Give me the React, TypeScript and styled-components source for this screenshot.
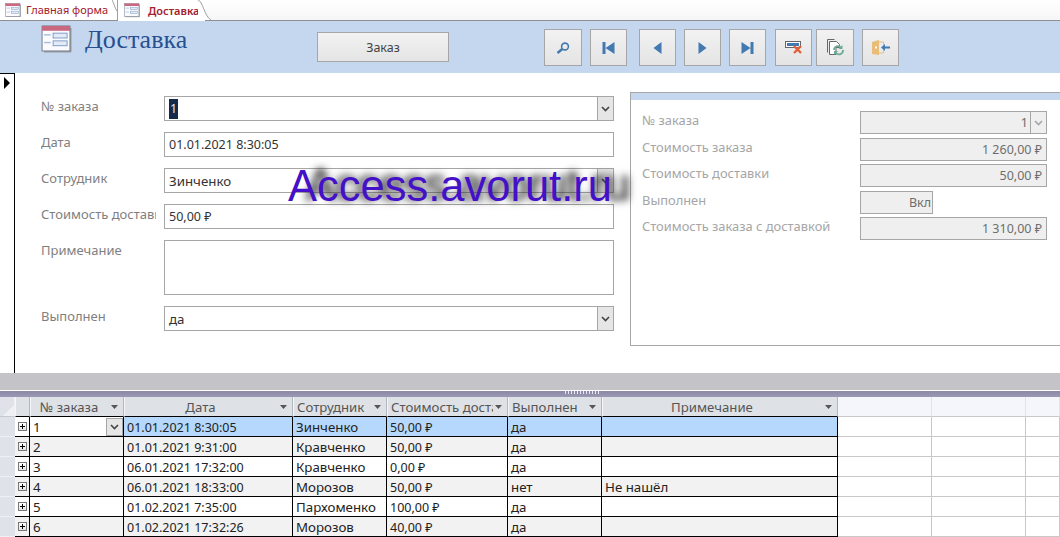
import React from 'react';
import styled, { createGlobalStyle } from 'styled-components';

const GlobalStyle = createGlobalStyle`
  html, body {
    margin: 0;
    padding: 0;
    background: #fff;
  }
  body {
    font-family: "Noto Sans", "Open Sans", sans-serif;
    font-size: 12.5px;
  }
`;

const Page = styled.div`
  width: 1060px;
  height: 537px;
  overflow: hidden;
  position: relative;
  display: flex;
  flex-direction: column;
  color: #333;
`;

/* tabs */
const TabBar = styled.div`
  height: 20px;
  flex: none;
  display: flex;
  background: linear-gradient(#fff, #f6f6f6);
  border-bottom: 1px solid #8f8f8f;
`;

const Tab = styled.div<{ $active?: boolean; $width: number }>`
  width: ${p => p.$width}px;
  height: ${p => (p.$active ? 21 : 20)}px;
  box-sizing: border-box;
  display: flex;
  align-items: center;
  padding-left: ${p => (p.$active ? 6 : 5)}px;
  gap: ${p => (p.$active ? 8 : 5)}px;
  background: #fff;
  position: relative;
  color: #a5202c;
  font-size: 11px;
  font-weight: ${p => (p.$active ? 600 : 400)};
  border-right: ${p => (p.$active ? 'none' : '1px solid #a0a0a0')};
  line-height: 18px;
`;

const TabCurve = styled.svg`
  position: absolute;
  right: -7px;
  top: 0;
`;

const TabNotch = styled.svg`
  position: absolute;
  right: -1px;
  top: 0;
`;

/* header */
const Header = styled.div`
  height: 52px;
  flex: none;
  display: flex;
  background: #c5d7ef;
`;

const TitleBlock = styled.div`
  width: 317px;
  flex: none;
  box-sizing: border-box;
  padding: 4px 0 0 41px;
  display: flex;
  gap: 13px;
  align-items: flex-start;
`;

const Title = styled.div`
  font-family: "Liberation Serif", serif;
  font-size: 26px;
  line-height: 30px;
  color: #27508f;
`;

const OrderButton = styled.div`
  width: 132px;
  height: 30px;
  margin: 11px 95px 0 0;
  flex: none;
  box-sizing: border-box;
  border: 1px solid #a6a6a6;
  background: linear-gradient(#f2f2f2, #e4e4e4);
  display: flex;
  align-items: center;
  justify-content: center;
  font-size: 12.5px;
  color: #444;
`;

const ToolButton = styled.div<{ $after: number; $width?: number }>`
  width: ${p => p.$width ?? 38}px;
  height: 37px;
  margin: 8px ${p => p.$after}px 0 0;
  flex: none;
  box-sizing: border-box;
  border: 1px solid #a6a6a6;
  background: linear-gradient(#f2f2f2, #e4e4e4);
  display: flex;
  align-items: center;
  justify-content: center;
`;

/* form */
const FormArea = styled.div`
  height: 300px;
  flex: none;
  display: flex;
  background: #fff;
`;

const RecordSelector = styled.div`
  width: 15px;
  flex: none;
  box-sizing: border-box;
  border-top: 1px solid #000;
  border-right: 1px solid #000;
  padding: 2px 0 0 4px;
`;

const LeftPane = styled.div`
  width: 599px;
  flex: none;
  box-sizing: border-box;
  padding: 23px 0 0 26px;
  display: flex;
  flex-direction: column;
  gap: 11px;
`;

const FieldRow = styled.div`
  display: flex;
`;

const FieldLabel = styled.div`
  width: 115px;
  margin-right: 8px;
  flex: none;
  overflow: hidden;
  white-space: nowrap;
  color: #7f7f7f;
  font-size: 13px;
  line-height: 20px;
`;

const FieldBox = styled.div<{ $height?: number }>`
  width: 450px;
  height: ${p => p.$height ?? 25}px;
  box-sizing: border-box;
  border: 1px solid #a6a6a6;
  background: #fff;
  display: flex;
  align-items: center;
  justify-content: space-between;
  padding-left: 4px;
  font-size: 12.5px;
  color: #333;
`;

const Selected = styled.span`
  background: #14294a;
  color: #dfe8f5;
  padding: 0 1px;
  line-height: 20px;
`;

const ComboArrow = styled.div<{ $faded?: boolean }>`
  width: 16px;
  align-self: stretch;
  flex: none;
  box-sizing: border-box;
  border-left: 1px solid #a6a6a6;
  background: ${p => (p.$faded ? '#efefef' : '#e6e6e6')};
  display: flex;
  align-items: center;
  justify-content: center;
`;

const SummaryPanel = styled.div`
  width: 431px;
  height: 254px;
  margin: 19px 0 0 16px;
  flex: none;
  box-sizing: border-box;
  border: 1px solid #a6a6a6;
  border-right: none;
  display: flex;
  flex-direction: column;
`;

const SummaryStrip = styled.div`
  height: 7px;
  flex: none;
  background: #c5d7ef;
`;

const SummaryRows = styled.div`
  padding: 11px 0 0 11px;
  display: flex;
  flex-direction: column;
  gap: 3.5px;
`;

const SummaryRow = styled.div`
  display: flex;
  height: 23px;
`;

const SummaryLabel = styled.div`
  width: 218px;
  flex: none;
  color: #a6a6a6;
  font-size: 12.9px;
  line-height: 19px;
  white-space: nowrap;
`;

const SummaryBox = styled.div<{ $width?: number }>`
  width: ${p => p.$width ?? 187}px;
  box-sizing: border-box;
  border: 1px solid #a6a6a6;
  background: #efefef;
  display: flex;
  align-items: center;
  justify-content: flex-end;
  padding-right: ${p => (p.$width ? 1 : 4)}px;
  color: #6e6e6e;
  font-size: 12.5px;
`;

const SummaryCombo = styled(SummaryBox)`
  padding-right: 0;
  gap: 2px;
`;

/* splitter */
const Splitter = styled.div`
  height: 17px;
  flex: none;
  background: #c4c4c8;
  border-bottom: 1px solid #fff;
`;

const SplitBand = styled.div`
  height: 6px;
  flex: none;
  background: linear-gradient(#8b89a6, #9a98b4);
  position: relative;
`;

const SplitGrip = styled.div`
  position: absolute;
  left: 565px;
  top: 0;
  width: 36px;
  height: 3px;
  background: repeating-linear-gradient(90deg, #e8e8f0 0 1px, transparent 1px 3px);
`;

/* datasheet */
const columns = '15px 15px 94px 169px 94px 121px 94px 236px 94px 94px 34px';

const SheetRow = styled.div`
  display: grid;
  grid-template-columns: ${columns};
  height: 20px;
  flex: none;
`;

const Corner = styled.div`
  background: #dfe3e9;
  box-sizing: border-box;
  border-bottom: 1px solid #c5c9d0;
  border-right: 1px solid #eef0f3;
  display: flex;
  align-items: flex-end;
  justify-content: flex-end;
`;

const HeadCell = styled.div`
  box-sizing: border-box;
  background: #dee1e6;
  border-bottom: 1px solid #000;
  border-right: 1px solid #b4b7bd;
  border-left: 1px solid #f4f5f7;
  display: flex;
  align-items: center;
  padding: 0 5px 0 3px;
  gap: 2px;
  font-size: 13.2px;
  color: #555;
  white-space: nowrap;
  overflow: hidden;
`;

const HeadText = styled.span<{ $left?: boolean }>`
  flex: 1;
  min-width: 0;
  overflow: hidden;
  padding-right: ${p => (p.$left ? 1 : 5)}px;
  text-align: ${p => (p.$left ? 'left' : 'center')};
`;

const EmptyHead = styled.div`
  box-sizing: border-box;
  background: #f5f6fc;
  border-bottom: 1px solid #c8c8c8;
  border-right: 1px solid #e2e3ea;
`;

const Cell = styled.div<{ $tone: 'plain' | 'alt' | 'active' }>`
  box-sizing: border-box;
  border-right: 1px solid #000;
  border-bottom: 1px solid #000;
  background: ${p => (p.$tone === 'active' ? '#b5d8fc' : p.$tone === 'alt' ? '#f2f2f2' : '#fff')};
  display: flex;
  align-items: center;
  justify-content: space-between;
  padding: 1px 0 0 3px;
  font-size: 12.5px;
  color: #222;
  white-space: nowrap;
  overflow: hidden;
`;

const ExpandCell = styled(Cell)`
  padding: 0 0 0 3px;
  justify-content: flex-start;
`;

const Words = styled.span`
  font-size: 13.3px;
`;

const PlusBox = styled.div`
  width: 9px;
  height: 9px;
  box-sizing: border-box;
  border: 1px solid #777;
  background: linear-gradient(#fff, #e4e4e4);
  position: relative;
  &::before {
    content: '';
    position: absolute;
    left: 1px;
    top: 3px;
    width: 5px;
    height: 1px;
    background: #000;
  }
  &::after {
    content: '';
    position: absolute;
    left: 3px;
    top: 1px;
    width: 1px;
    height: 5px;
    background: #000;
  }
`;

const SideCell = styled.div`
  box-sizing: border-box;
  background: #dfe3e9;
  border-bottom: 1px solid #eef0f3;
`;

const EmptyCell = styled.div`
  box-sizing: border-box;
  background: #fff;
  border-right: 1px solid #c8c8c8;
  border-bottom: 1px solid #c8c8c8;
`;

const GridCombo = styled.div`
  width: 17px;
  height: 18px;
  flex: none;
  box-sizing: border-box;
  border: 1px solid #a6a6a6;
  background: #e6e6e6;
  display: flex;
  align-items: center;
  justify-content: center;
`;

/* watermark over the form */
const Watermark = styled.div`
  position: absolute;
  left: 288px;
  top: 161px;
  font-family: "Liberation Sans", Arial, sans-serif;
  font-size: 43.5px;
  line-height: 50px;
  color: #4410c8;
  white-space: nowrap;
  text-shadow: 18px -1px 7px rgba(50, 50, 50, 0.85), 18px -1px 10px rgba(50, 50, 50, 0.6);
`;

const FormIcon: React.FC<{ size: number }> = ({ size }) => (
  <svg width={size} height={size * 0.9} viewBox="0 0 32 29" style={{ flex: 'none' }}>
    <rect x="1" y="1" width="29" height="26" fill="#fbfbfd" stroke="#6f7a8c" />
    <rect x="1" y="1" width="29" height="5" fill="#c9677f" />
    <rect x="30" y="3" width="1.5" height="25" fill="#8a8f98" />
    <rect x="3" y="27" width="28" height="1.5" fill="#8a8f98" />
    <rect x="3" y="9.5" width="7" height="1.5" fill="#a9bfdc" />
    <rect x="3" y="17.5" width="7" height="1.5" fill="#a9bfdc" />
    <rect x="12.5" y="8.5" width="14.5" height="5" fill="#e3ebf6" stroke="#7e9cc6" />
    <rect x="12.5" y="16.5" width="14.5" height="5" fill="#e3ebf6" stroke="#7e9cc6" />
  </svg>
);

const Chevron: React.FC<{ color?: string }> = ({ color = '#444' }) => (
  <svg width="9" height="6" viewBox="0 0 9 6">
    <path d="M1 1l3.5 3.5L8 1" fill="none" stroke={color} strokeWidth="1.6" />
  </svg>
);

const SortArrow: React.FC = () => (
  <svg width="7" height="4" viewBox="0 0 7 4" style={{ flex: 'none' }}>
    <path d="M0 0h7L3.5 4z" fill="#555" />
  </svg>
);

const blue = '#4279b0';

const NavIcon: React.FC<{ kind: 'first' | 'prev' | 'next' | 'last' }> = ({ kind }) => (
  <svg width="13" height="12" viewBox="0 0 13 12">
    {kind === 'first' && <path d="M0.5 0h3v12h-3zM12.5 0v12L3.5 6z" fill={blue} />}
    {kind === 'prev' && <path d="M10.5 0v12L2.5 6z" fill={blue} />}
    {kind === 'next' && <path d="M2.5 0v12l8-6z" fill={blue} />}
    {kind === 'last' && <path d="M0.5 0v12l9-6zM9.5 0h3v12h-3z" fill={blue} />}
  </svg>
);

const SearchIcon: React.FC = () => (
  <svg width="14" height="12" viewBox="0 0 14 12">
    <circle cx="9" cy="4.5" r="3.4" fill="none" stroke={blue} strokeWidth="1.6" />
    <path d="M6.3 7L1.5 11" stroke={blue} strokeWidth="2.4" />
  </svg>
);

const DeleteIcon: React.FC = () => (
  <svg width="17" height="13" viewBox="0 0 17 13">
    <rect x="0.5" y="0.5" width="15" height="6" fill="#fff" stroke="#666" />
    <rect x="2" y="2" width="12" height="3" fill={blue} />
    <path d="M9 5l7 7M16 5l-7 7" stroke="#e0603c" strokeWidth="2.4" />
  </svg>
);

const CopyIcon: React.FC = () => (
  <svg width="17" height="17" viewBox="0 0 17 17">
    <path d="M0.5 13.5V0.5h7" fill="none" stroke="#666" />
    <path d="M2.5 15.5V2.5h7l3 3v3H9v7z" fill="#fff" stroke="#666" />
    <path d="M7 11a4 4 0 0 1 7-2.5M16 11a4 4 0 0 1-7 3" fill="none" stroke="#6bab94" strokeWidth="1.8" />
    <path d="M15.5 6v4h-4zM7 16v-4h4z" fill="#6bab94" />
  </svg>
);

const ExitIcon: React.FC = () => (
  <svg width="18" height="15" viewBox="0 0 18 15">
    <path d="M0 2l7-2v15l-7-1z" fill="#e9bd78" />
    <path d="M7 2h4.5v3M7 13h4.5v-3" fill="none" stroke="#e9bd78" />
    <rect x="3" y="6.5" width="2" height="2" fill="#fff" />
    <path d="M18 6.5v2h-5v2.5L9 7.5 13 4v2.5z" fill={blue} />
  </svg>
);

type Order = {
  id: number;
  date: string;
  worker: string;
  cost: string;
  done: string;
  note: string;
};

const orders: Order[] = [
  { id: 1, date: '01.01.2021 8:30:05', worker: 'Зинченко', cost: '50,00 ₽', done: 'да', note: '' },
  { id: 2, date: '01.01.2021 9:31:00', worker: 'Кравченко', cost: '50,00 ₽', done: 'да', note: '' },
  { id: 3, date: '06.01.2021 17:32:00', worker: 'Кравченко', cost: '0,00 ₽', done: 'да', note: '' },
  { id: 4, date: '06.01.2021 18:33:00', worker: 'Морозов', cost: '50,00 ₽', done: 'нет', note: 'Не нашёл' },
  { id: 5, date: '01.02.2021 7:35:00', worker: 'Пархоменко', cost: '100,00 ₽', done: 'да', note: '' },
  { id: 6, date: '01.02.2021 17:32:26', worker: 'Морозов', cost: '40,00 ₽', done: 'да', note: '' },
];

const headers: { text: string; left?: boolean }[] = [
  { text: '№ заказа' },
  { text: 'Дата' },
  { text: 'Сотрудник', left: true },
  { text: 'Стоимость доставки', left: true },
  { text: 'Выполнен', left: true },
  { text: 'Примечание' },
];

const App: React.FC = () => {
  return (
    <Page>
      <GlobalStyle />
      <TabBar>
        <Tab $width={118}>
          <FormIcon size={16} />
          Главная форма
          <TabNotch width="6" height="20" viewBox="0 0 6 20">
            <path d="M0 0c2 3 3 9 5 11" fill="none" stroke="#a0a0a0" />
          </TabNotch>
        </Tab>
        <Tab $active $width={87}>
          <FormIcon size={16} />
          Доставка
          <TabCurve width="14" height="21" viewBox="0 0 14 21">
            <path d="M0 0c5 1 6 16 13 20H0z" fill="#fff" />
            <path d="M0 0c5 1 6 16 13 20" fill="none" stroke="#a0a0a0" />
          </TabCurve>
        </Tab>
      </TabBar>

      <Header>
        <TitleBlock>
          <FormIcon size={31} />
          <Title>Доставка</Title>
        </TitleBlock>
        <OrderButton>Заказ</OrderButton>
        <ToolButton $after={8}><SearchIcon /></ToolButton>
        <ToolButton $after={12} $width={37}><NavIcon kind="first" /></ToolButton>
        <ToolButton $after={8} $width={37}><NavIcon kind="prev" /></ToolButton>
        <ToolButton $after={8} $width={37}><NavIcon kind="next" /></ToolButton>
        <ToolButton $after={9} $width={37}><NavIcon kind="last" /></ToolButton>
        <ToolButton $after={4} $width={37}><DeleteIcon /></ToolButton>
        <ToolButton $after={8}><CopyIcon /></ToolButton>
        <ToolButton $after={0} $width={37}><ExitIcon /></ToolButton>
      </Header>

      <FormArea>
        <RecordSelector>
          <svg width="7" height="12" viewBox="0 0 7 12">
            <path d="M0 0l6 6-6 6z" fill="#000" />
          </svg>
        </RecordSelector>
        <LeftPane>
          <FieldRow>
            <FieldLabel>№ заказа</FieldLabel>
            <FieldBox>
              <Selected>1</Selected>
              <ComboArrow><Chevron /></ComboArrow>
            </FieldBox>
          </FieldRow>
          <FieldRow>
            <FieldLabel>Дата</FieldLabel>
            <FieldBox>01.01.2021 8:30:05</FieldBox>
          </FieldRow>
          <FieldRow>
            <FieldLabel>Сотрудник</FieldLabel>
            <FieldBox>
              <Words>Зинченко</Words>
              <ComboArrow><Chevron /></ComboArrow>
            </FieldBox>
          </FieldRow>
          <FieldRow>
            <FieldLabel>Стоимость доставки</FieldLabel>
            <FieldBox>50,00 ₽</FieldBox>
          </FieldRow>
          <FieldRow>
            <FieldLabel>Примечание</FieldLabel>
            <FieldBox $height={55} />
          </FieldRow>
          <FieldRow>
            <FieldLabel>Выполнен</FieldLabel>
            <FieldBox>
              <Words>да</Words>
              <ComboArrow><Chevron /></ComboArrow>
            </FieldBox>
          </FieldRow>
        </LeftPane>
        <SummaryPanel>
          <SummaryStrip />
          <SummaryRows>
            <SummaryRow>
              <SummaryLabel>№ заказа</SummaryLabel>
              <SummaryCombo>
                1
                <ComboArrow $faded><Chevron color="#a6a6a6" /></ComboArrow>
              </SummaryCombo>
            </SummaryRow>
            <SummaryRow>
              <SummaryLabel>Стоимость заказа</SummaryLabel>
              <SummaryBox>1 260,00 ₽</SummaryBox>
            </SummaryRow>
            <SummaryRow>
              <SummaryLabel>Стоимость доставки</SummaryLabel>
              <SummaryBox>50,00 ₽</SummaryBox>
            </SummaryRow>
            <SummaryRow>
              <SummaryLabel>Выполнен</SummaryLabel>
              <SummaryBox $width={73}>Вкл</SummaryBox>
            </SummaryRow>
            <SummaryRow>
              <SummaryLabel>Стоимость заказа с доставкой</SummaryLabel>
              <SummaryBox>1 310,00 ₽</SummaryBox>
            </SummaryRow>
          </SummaryRows>
        </SummaryPanel>
      </FormArea>

      <Splitter />
      <SplitBand><SplitGrip /></SplitBand>

      <SheetRow>
        <Corner>
          <svg width="11" height="11" viewBox="0 0 11 11">
            <path d="M11 0v11H0z" fill="#eef0f3" />
          </svg>
        </Corner>
        <HeadCell />
        {headers.map(h => (
          <HeadCell key={h.text}>
            <HeadText $left={h.left}>{h.text}</HeadText>
            <SortArrow />
          </HeadCell>
        ))}
        <EmptyHead />
        <EmptyHead />
        <EmptyHead />
      </SheetRow>

      {orders.map((o, i) => {
        const tone = i === 0 ? 'active' : i % 2 === 1 ? 'alt' : 'plain';
        return (
          <SheetRow key={o.id}>
            <SideCell />
            <ExpandCell $tone={i % 2 === 1 ? 'alt' : 'plain'}>
              <PlusBox />
            </ExpandCell>
            <Cell $tone={i === 0 ? 'plain' : tone}>
              <Words>{o.id}</Words>
              {i === 0 && <GridCombo><Chevron /></GridCombo>}
            </Cell>
            <Cell $tone={tone}>{o.date}</Cell>
            <Cell $tone={tone}><Words>{o.worker}</Words></Cell>
            <Cell $tone={tone}>{o.cost}</Cell>
            <Cell $tone={tone}><Words>{o.done}</Words></Cell>
            <Cell $tone={tone}><Words>{o.note}</Words></Cell>
            <EmptyCell />
            <EmptyCell />
            <EmptyCell />
          </SheetRow>
        );
      })}

      <Watermark>Access.avorut.ru</Watermark>
    </Page>
  );
};

export default App;
